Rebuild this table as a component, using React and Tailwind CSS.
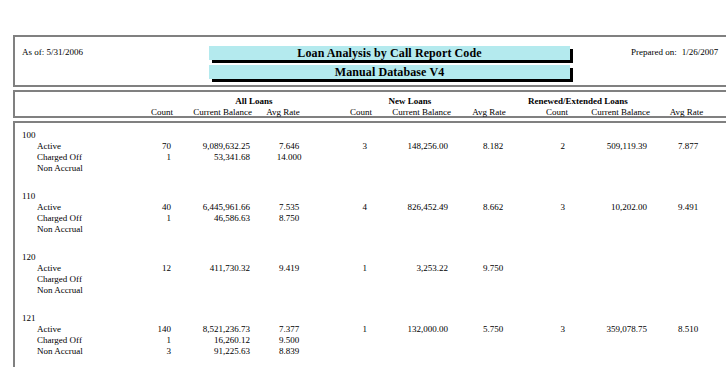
import React from "react";

const dataCols = [
  "w-[116px] shrink-0",
  "w-[40px] shrink-0 text-right",
  "w-[79px] shrink-0 text-right",
  "w-[78px] shrink-0 text-center",
  "w-[39px] shrink-0 text-right",
  "w-[81px] shrink-0 text-right",
  "w-[90px] shrink-0 text-center",
  "w-[27px] shrink-0 text-right",
  "w-[82px] shrink-0 text-right",
  "w-[82px] shrink-0 text-center",
];

const headCols = [
  "w-[118px] shrink-0",
  "w-[40px] shrink-0 text-right",
  "w-[79px] shrink-0 text-right",
  "w-[62px] shrink-0 text-center",
  "w-[58px] shrink-0 text-right",
  "w-[79px] shrink-0 text-right",
  "w-[76px] shrink-0 text-center",
  "w-[41px] shrink-0 text-right",
  "w-[82px] shrink-0 text-right",
  "w-[73px] shrink-0 text-center",
];

const groups = [
  {
    code: "100",
    rows: [
      ["Active", "70", "9,089,632.25", "7.646", "3", "148,256.00", "8.182", "2", "509,119.39", "7.877"],
      ["Charged Off", "1", "53,341.68", "14.000"],
      ["Non Accrual"],
    ],
  },
  {
    code: "110",
    rows: [
      ["Active", "40", "6,445,961.66", "7.535", "4", "826,452.49", "8.662", "3", "10,202.00", "9.491"],
      ["Charged Off", "1", "46,586.63", "8.750"],
      ["Non Accrual"],
    ],
  },
  {
    code: "120",
    rows: [
      ["Active", "12", "411,730.32", "9.419", "1", "3,253.22", "9.750"],
      ["Charged Off"],
      ["Non Accrual"],
    ],
  },
  {
    code: "121",
    rows: [
      ["Active", "140", "8,521,236.73", "7.377", "1", "132,000.00", "5.750", "3", "359,078.75", "8.510"],
      ["Charged Off", "1", "16,260.12", "9.500"],
      ["Non Accrual", "3", "91,225.63", "8.839"],
    ],
  },
];

function DataRow({ cells }) {
  return (
    <div className="flex h-[11px] leading-[11px] whitespace-nowrap">
      {dataCols.map((c, i) => (
        <div key={i} className={c + (i === 0 ? " pl-[22px]" : "")}>
          {cells[i] || ""}
        </div>
      ))}
    </div>
  );
}

function TitleBar({ children }) {
  return (
    <div className="w-[361px] h-[14px] bg-[#b4eaee] shadow-[3px_3px_0_#000] text-center text-[12px] leading-[14px] font-bold tracking-[0.1px]">
      {children}
    </div>
  );
}

export default function App() {
  const labels = ["", "Count", "Current Balance", "Avg Rate", "Count", "Current Balance", "Avg Rate", "Count", "Current Balance", "Avg Rate"];
  return (
    <div className="w-[726px] h-[367px] overflow-hidden bg-white text-black font-['Liberation_Serif','Times_New_Roman',serif] text-[9px]">
      <div className="pt-[35px] pl-[13px]">
        {/* Report header */}
        <div className="w-[760px] h-[52px] border-2 border-[#808080] flex">
          <div className="w-[194px] shrink-0 pl-[7px] pt-[10px] leading-[11px]">As of: 5/31/2006</div>
          <div className="w-[361px] shrink-0 pt-[9px] flex flex-col gap-[5px]">
            <TitleBar>Loan Analysis by Call Report Code</TitleBar>
            <TitleBar>Manual Database V4</TitleBar>
          </div>
          <div className="ml-[61px] pt-[10px] leading-[11px] whitespace-nowrap">
            Prepared on:<span className="ml-[5px]">1/26/2007</span>
          </div>
        </div>

        {/* Column header */}
        <div className="mt-[3px] w-[760px] h-[28px] border-2 border-[#808080] pt-[4px] leading-[10px] whitespace-nowrap">
          <div className="flex font-bold h-[10px]">
            <div className="w-[199px] shrink-0" />
            <div className="w-[80px] shrink-0 text-center">All Loans</div>
            <div className="w-[76px] shrink-0" />
            <div className="w-[80px] shrink-0 text-center">New Loans</div>
            <div className="w-[68px] shrink-0" />
            <div className="w-[120px] shrink-0 text-center">Renewed/Extended Loans</div>
          </div>
          <div className="flex h-[10px] mt-[1px]">
            {headCols.map((c, i) => (
              <div key={i} className={c}>{labels[i]}</div>
            ))}
          </div>
        </div>

        {/* Data */}
        <div className="mt-[3px] w-[760px] h-[260px] border-2 border-b-0 border-[#808080] pt-[7px]">
          {groups.map((g) => (
            <div key={g.code} className="mb-[17px]">
              <div className="h-[11px] leading-[11px] pl-[7px]">{g.code}</div>
              {g.rows.map((r, j) => (
                <DataRow key={j} cells={r} />
              ))}
            </div>
          ))}
        </div>
      </div>
    </div>
  );
}
